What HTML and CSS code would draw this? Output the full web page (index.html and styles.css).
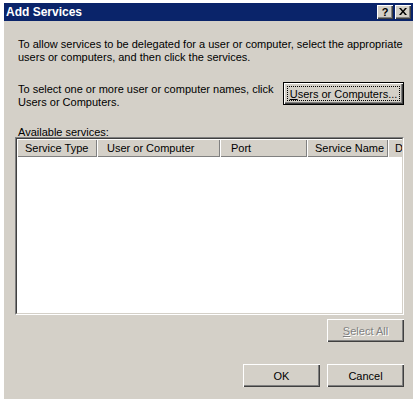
FILE: index.html
```html
<!DOCTYPE html>
<html>
<head>
<meta charset="utf-8">
<link rel="stylesheet" href="styles.css">
</head>
<body>
<div class="dialog">
  <div class="titlebar">
    <span class="title">Add Services</span>
    <div class="tbtns">
      <span class="tbtn help">?</span>
      <span class="tbtn close"><svg width="8" height="7" viewBox="0 0 8 7"><path d="M0 0h2l2 2.5L6 0h2L5 3.5 8 7H6L4 4.5 2 7H0l3-3.5z" fill="#000"/></svg></span>
    </div>
  </div>
  <div class="content">
    <p class="intro">To allow services to be delegated for a user or computer, select the appropriate<br>users or computers, and then click the services.</p>
    <div class="selrow">
      <p class="seltext">To select one or more user or computer names, click<br>Users or Computers.</p>
      <button class="btn default"><span class="focus"><u>U</u>sers or Computers...</span></button>
    </div>
    <div class="avail"><u>A</u>vailable services:</div>
    <div class="list">
      <div class="header">
        <div class="col c1">Service Type</div>
        <div class="col c2">User or Computer</div>
        <div class="col c3">Port</div>
        <div class="col c4">Service Name</div>
        <div class="col c5">D</div>
      </div>
      <div class="rows"></div>
    </div>
    <div class="selall-row">
      <button class="btn disabled"><u>S</u>elect All</button>
    </div>
    <div class="footer">
      <button class="btn">OK</button>
      <button class="btn">Cancel</button>
    </div>
  </div>
</div>
</body>
</html>
```
FILE: styles.css
```css
* { box-sizing: border-box; }
html, body { margin: 0; padding: 0; background: #ffffff; }
body {
  font-family: "Liberation Sans", Arial, sans-serif;
  font-size: 11px;
  color: #000;
}
.dialog {
  margin: 3px 0 0 4px;
  width: 409px;
  height: 396px;
  background: #d4d0c8;
  display: flex;
  flex-direction: column;
}
.titlebar {
  height: 18px;
  background: #0a246a;
  display: flex;
  align-items: center;
  justify-content: space-between;
  padding: 0 2px 0 2px;
}
.title {
  color: #fff;
  font-weight: bold;
  font-size: 12px;
  line-height: 18px;
}
.tbtns { display: flex; gap: 2px; }
.tbtn {
  width: 16px;
  height: 14px;
  background: #d4d0c8;
  box-shadow: inset 1px 1px #fff, inset -1px -1px #404040, inset -2px -2px #808080;
  display: flex;
  align-items: center;
  justify-content: center;
  font-weight: bold;
  font-size: 11px;
  line-height: 14px;
  padding-bottom: 1px;
}
.content {
  padding: 0 9px 0 11px;
  display: flex;
  flex-direction: column;
}
p { margin: 0; }
.intro {
  margin-top: 17px;
  padding-left: 3px;
  line-height: 13px;
  white-space: nowrap;
}
.selrow {
  margin-top: 18px;
  display: flex;
  justify-content: space-between;
  align-items: flex-start;
}
.seltext {
  margin-top: 1px;
  padding-left: 3px;
  line-height: 13px;
  white-space: nowrap;
}
.btn {
  font-family: "Liberation Sans", Arial, sans-serif;
  font-size: 11px;
  color: #000;
  background: #d4d0c8;
  border: none;
  margin: 0;
  padding: 0;
  width: 77px;
  height: 23px;
  box-shadow: inset 1px 1px #fff, inset -1px -1px #404040, inset -2px -2px #808080;
  display: flex;
  align-items: center;
  justify-content: center;
}
.btn.default {
  width: 121px;
  border: 1px solid #000;
  padding: 3px;
}
.focus {
  border: 1px dotted #000;
  width: 100%;
  height: 100%;
  display: flex;
  align-items: center;
  justify-content: center;
}
.avail {
  margin-top: 17px;
  padding-left: 3px;
  height: 11px;
  line-height: 13px;
  overflow: visible;
}
.list {
  height: 178px;
  background: #fff;
  border-top: 1px solid #808080;
  border-left: 1px solid #808080;
  border-right: 1px solid #fff;
  border-bottom: 1px solid #fff;
  display: flex;
  flex-direction: column;
}
.list .header, .list .rows {
  border-left: 1px solid #404040;
}
.header {
  display: flex;
  height: 19px;
  border-top: 1px solid #404040;
  border-right: 1px solid #d4d0c8;
  overflow: hidden;
  flex-shrink: 0;
}
.rows {
  flex: 1;
  border-right: 1px solid #d4d0c8;
  border-bottom: 1px solid #d4d0c8;
}
.col {
  flex-shrink: 0;
  height: 18px;
  background: #d4d0c8;
  box-shadow: inset 1px 1px #fff, inset -1px -1px #808080;
  padding-left: 8px;
  line-height: 18px;
  white-space: nowrap;
  overflow: hidden;
}
.c1 { width: 80px; }
.c2 { width: 123px; padding-left: 10px; }
.c3 { width: 87px; padding-left: 11px; }
.c4 { width: 81px; }
.c5 { width: 14px; padding-left: 7px; box-shadow: inset 1px 1px #fff; }
.selall-row {
  margin-top: 4px;
  display: flex;
  justify-content: flex-end;
}
.btn.disabled {
  color: #808080;
  text-shadow: 1px 1px 0 #fff;
}
.footer {
  margin-top: 22px;
  display: flex;
  justify-content: flex-end;
  gap: 7px;
}
```
